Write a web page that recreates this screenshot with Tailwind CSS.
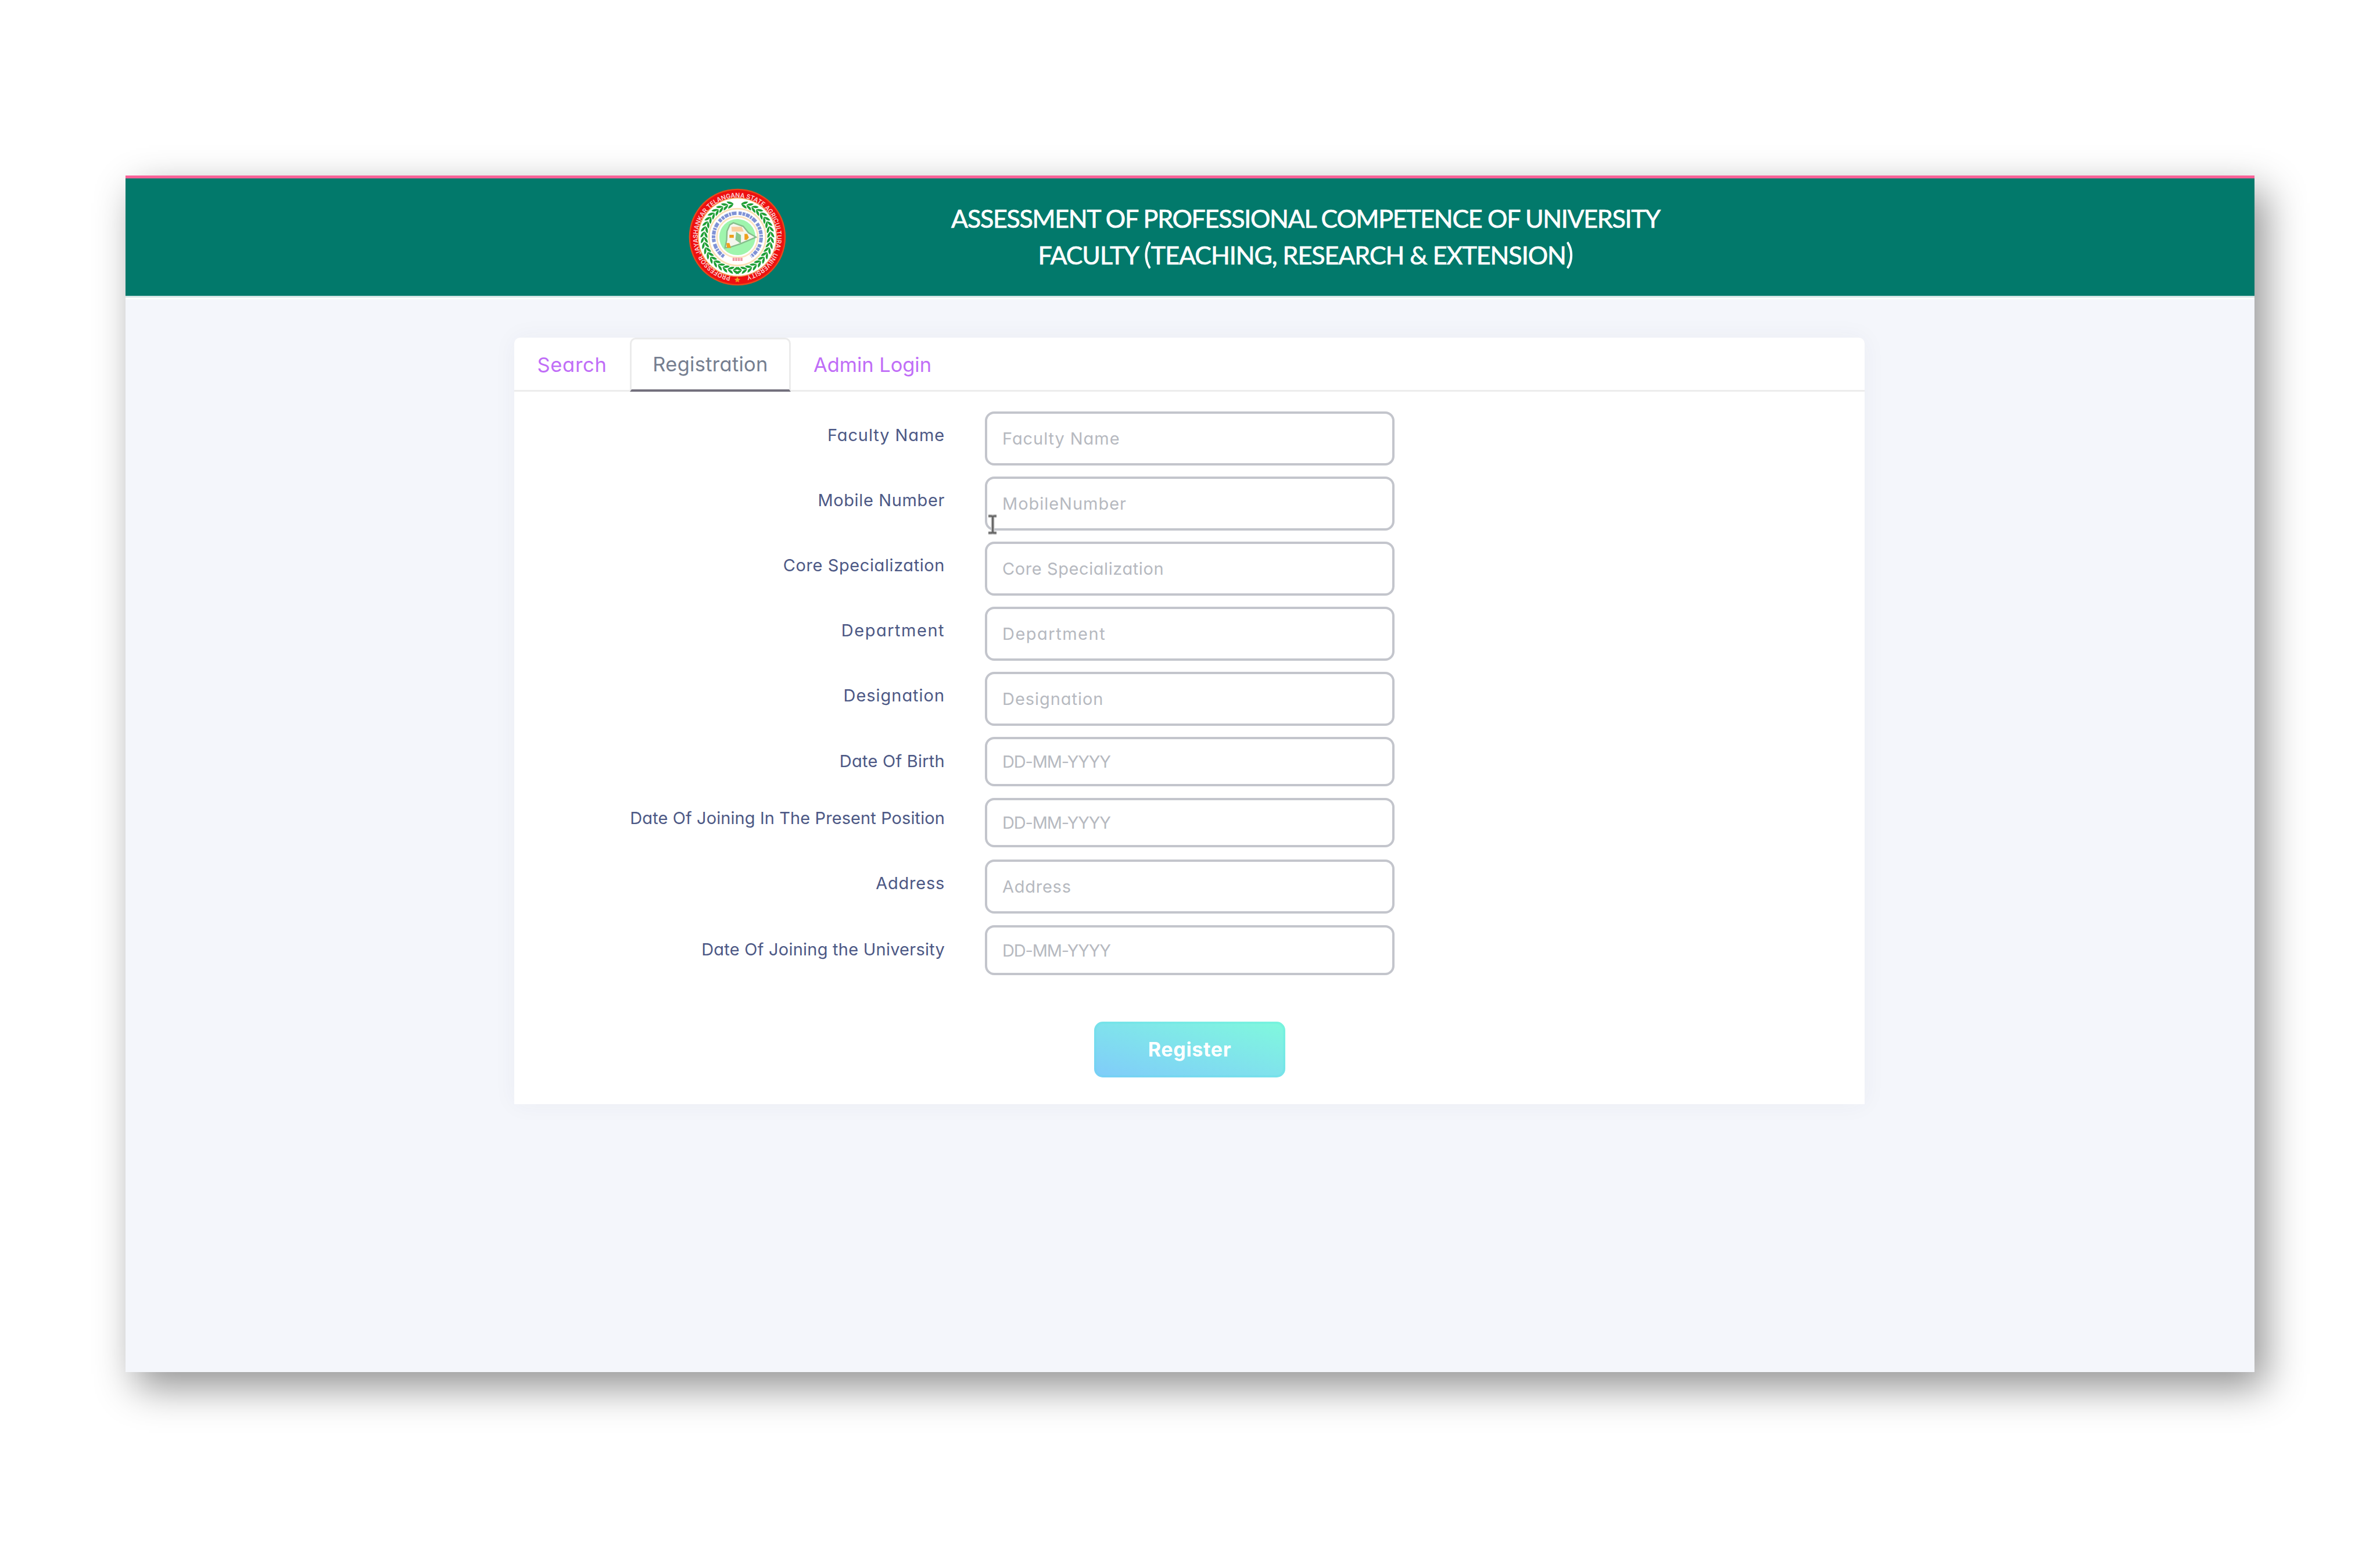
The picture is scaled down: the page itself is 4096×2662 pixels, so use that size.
<!DOCTYPE html>
<html lang="en">
<head>
<meta charset="utf-8">
<title>Assessment of Professional Competence</title>
<script src="https://cdn.jsdelivr.net/npm/@tailwindcss/browser@4"></script>
</head>
<body class="w-[4096px] h-[2662px] overflow-hidden bg-white pt-[302px] pl-[216px] font-['Inter',sans-serif] [font-feature-settings:'cv11']">
<div class="w-[3664px] h-[2059px] bg-[#f4f6fb] flex flex-col shadow-[18px_26px_64px_rgba(0,0,0,0.43)]">
  <div class="h-[5px] bg-[#f96298]"></div>
  <header class="h-[202px] bg-[#02796b] flex items-center pl-[969px]">
    <svg class="w-[168px] h-[168px] shrink-0" viewBox="0 0 246 246">
      <defs>
        <path id="ring" d="M106 221.600A100 100 0 1 1 140 221.600"/>
        <path id="leaf" d="M0-92q9 5 9 16q-9-2-9-16zM0-92q-9 5-9 16q9-2 9-16z"/>
      </defs>
      <circle cx="123" cy="123" r="122" fill="#e64a1c"/>
      <circle cx="123" cy="123" r="118.500" fill="#ee1010"/>
      <circle cx="123" cy="123" r="100" fill="#f8a25a"/>
      <circle cx="123" cy="123" r="97.500" fill="#fff"/>
      <text font-family="Inter" font-weight="600" font-size="16" fill="#fcd5d9"><textPath href="#ring" textLength="588" lengthAdjust="spacingAndGlyphs">PROFESSOR JAYASHANKAR TELANGANA STATE AGRICULTURAL UNIVERSITY</textPath></text>
      <path d="M123 223l2.500 5 5 .500-4 3.500 1 5-4.500-2.500-4.500 2.500 1-5-4-3.500 5-.500z" fill="#f09a20"/>
      <g id="leaves" fill="#1f9f35" transform="translate(123 123)"></g>
      <circle cx="123" cy="123" r="71.500" fill="#fff" stroke="#fbe0b4" stroke-width="4"/>
      <path d="M89 172A60 60 0 1 1 157 172" fill="none" stroke="#8093d6" stroke-width="9" stroke-dasharray="7 2 10 2 5 2 12 5 8 2"/>
      <circle cx="123" cy="123" r="51.500" fill="#fff" stroke="#fde3c0" stroke-width="4"/>
      <circle cx="123" cy="123" r="45.500" fill="#9ff5ad"/>
      <path d="M113 87l11 4 14 5 13 16 19 11-18 8-22 9-24 8-14 2 4-20 1-22 7-16z" fill="#f4f7ee" stroke="#86bd8c" stroke-width="3.500"/>
      <path d="M108 97l26 0 5 12-30 0z" fill="#fbcf9e"/>
      <path d="M103 117h11v8h-11zM141 115h7l4 9-5 6h-6zM95 138h8l4 12h-10z" fill="#eea01c"/>
      <path d="M120 110l12 8 0 22-14-10z" fill="#86c78d"/>
      <path d="M111 179h25" stroke="#f29aa3" stroke-width="8" stroke-dasharray="5.200 1.400"/>
    </svg>
    <h1 class="w-[1300px] ml-[244px] mb-[2px] text-center font-['Lato',sans-serif] text-[43px] leading-[63px] text-white [-webkit-text-stroke:0.7px_white]">
      <span class="block tracking-[-1.3px]">ASSESSMENT OF PROFESSIONAL COMPETENCE OF UNIVERSITY</span>
      <span class="block tracking-[-1.05px]">FACULTY <span class="text-[51px] leading-none [-webkit-text-stroke:0]">(</span>TEACHING, RESEARCH &amp; EXTENSION<span class="text-[51px] leading-none [-webkit-text-stroke:0]">)</span></span>
    </h1>
  </header>
  <div class="h-[3px] bg-[#d6e5e6]"></div>
  <div class="h-[3px] bg-white"></div>
  <main class="ml-[669px] mt-[66px] w-[2324px] h-[1319px] bg-white rounded-t-[10px] shadow-[0_0_40px_rgba(60,60,90,0.05)] flex flex-col">
    <nav class="h-[93px] shrink-0 flex border-b-[3px] border-[#ececec] text-[34.5px] leading-[40px] text-[#c06df7]">
      <a class="w-[199px] pt-[3px] flex items-center justify-center tracking-[0.7px]">Search</a>
      <a class="w-[277px] -mb-[3px] flex items-center justify-center tracking-[0.28px] text-[#757e90] border-[3px] border-b-[4px] border-[#ebebeb] border-b-[#73707d] rounded-t-[10px]">Registration</a>
      <a class="w-[281px] pt-[3px] flex items-center justify-center tracking-[-0.07px]">Admin Login</a>
    </nav>
    <form class="pt-[34px] flex flex-col text-[29px] leading-[40px] text-[#4c5885]">
      <div class="h-[112px] flex gap-[69px]"><label class="w-[741px] pt-[21px] text-right tracking-[0.9px]">Faculty Name</label><input class="w-[705px] h-[93px] px-[26px] border-[4px] border-[#c3c5cc] rounded-[16px] placeholder:text-[#b6b9c0] placeholder:opacity-100 tracking-[0.93px]" placeholder="Faculty Name"></div>
      <div class="relative h-[112px] flex gap-[69px]"><label class="w-[741px] pt-[21px] text-right tracking-[0.63px]">Mobile Number</label><input class="w-[705px] h-[93px] px-[26px] border-[4px] border-[#c3c5cc] rounded-[16px] placeholder:text-[#b6b9c0] placeholder:opacity-100 tracking-[0.97px]" placeholder="MobileNumber">
        <svg class="absolute left-[815px] top-[65px] w-[17px] h-[35px]" viewBox="0 0 17 35" fill="none"><path d="M1 3h4.500q3 0 3 2.500q0-2.500 3-2.500H15M8.500 4v27M1 32h4.500q3 0 3-2.500q0 2.500 3 2.500H15" stroke="#c9c9c9" stroke-width="6"/><path d="M1 3h4.500q2.500 0 3 2q.500-2 3-2H15M8.500 4v27M1 32h4.500q2.500 0 3-2q.500 2 3 2H15" stroke="#686868" stroke-width="3.200"/></svg>
      </div>
      <div class="h-[112px] flex gap-[69px]"><label class="w-[741px] pt-[21px] text-right tracking-[0.58px]">Core Specialization</label><input class="w-[705px] h-[93px] px-[26px] border-[4px] border-[#c3c5cc] rounded-[16px] placeholder:text-[#b6b9c0] placeholder:opacity-100 tracking-[0.58px]" placeholder="Core Specialization"></div>
      <div class="h-[112px] flex gap-[69px]"><label class="w-[741px] pt-[21px] text-right tracking-[1.5px]">Department</label><input class="w-[705px] h-[93px] px-[26px] border-[4px] border-[#c3c5cc] rounded-[16px] placeholder:text-[#b6b9c0] placeholder:opacity-100 tracking-[1.5px]" placeholder="Department"></div>
      <div class="h-[112px] flex gap-[69px]"><label class="w-[741px] pt-[21px] text-right tracking-[0.96px]">Designation</label><input class="w-[705px] h-[93px] px-[26px] border-[4px] border-[#c3c5cc] rounded-[16px] placeholder:text-[#b6b9c0] placeholder:opacity-100 tracking-[0.96px]" placeholder="Designation"></div>
      <div class="h-[105px] flex gap-[69px]"><label class="w-[741px] pt-[22px] text-right tracking-[0.24px]">Date Of Birth</label><input class="w-[705px] h-[85px] px-[26px] border-[4px] border-[#c3c5cc] rounded-[16px] placeholder:text-[#b6b9c0] placeholder:opacity-100 tracking-[-1.15px]" placeholder="DD-MM-YYYY"></div>
      <div class="h-[106px] flex gap-[69px]"><label class="w-[741px] pt-[15px] text-right tracking-[0.09px]">Date Of Joining In The Present Position</label><input class="w-[705px] h-[85px] px-[26px] border-[4px] border-[#c3c5cc] rounded-[16px] placeholder:text-[#b6b9c0] placeholder:opacity-100 tracking-[-1.15px]" placeholder="DD-MM-YYYY"></div>
      <div class="h-[113px] flex gap-[69px]"><label class="w-[741px] pt-[21px] text-right tracking-[0.75px]">Address</label><input class="w-[705px] h-[93px] px-[26px] border-[4px] border-[#c3c5cc] rounded-[16px] placeholder:text-[#b6b9c0] placeholder:opacity-100 tracking-[0.75px]" placeholder="Address"></div>
      <div class="h-[166px] flex gap-[69px]"><label class="w-[741px] pt-[22px] text-right tracking-[0.23px]">Date Of Joining the University</label><input class="w-[705px] h-[86px] px-[26px] border-[4px] border-[#c3c5cc] rounded-[16px] placeholder:text-[#b6b9c0] placeholder:opacity-100 tracking-[-1.15px]" placeholder="DD-MM-YYYY"></div>
      <button type="button" class="ml-[998px] w-[329px] h-[96px] rounded-[15px] bg-linear-to-tr from-[#80cbfa] to-[#80f9dc] shadow-[inset_0_0_0_4px_rgba(80,225,225,0.18)] text-white font-bold text-[34px] tracking-[0.7px]">Register</button>
    </form>
  </main>
</div>
<script>
  // Wreath of leaves around the emblem, mirrored left and right with a gap at the top.
  const wreath = document.getElementById('leaves');
  for (let a = 12; a <= 180; a += 9.2) {
    for (const side of [1, -1]) {
      const g = document.createElementNS('http://www.w3.org/2000/svg', 'use');
      g.setAttribute('href', '#leaf');
      g.setAttribute('transform', `rotate(${a * side}) translate(0 -84) rotate(${-90 * side}) translate(0 84)`);
      wreath.appendChild(g);
    }
  }
</script>
</body>
</html>
